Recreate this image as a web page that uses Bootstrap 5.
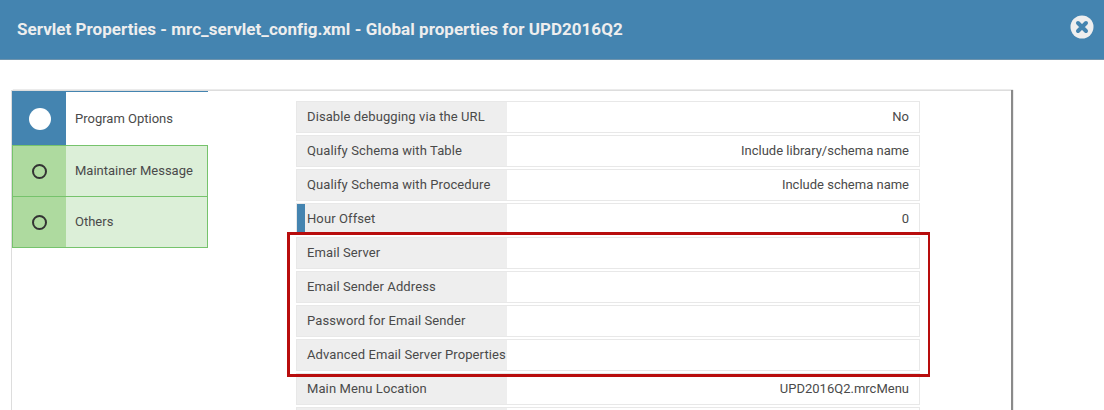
<!DOCTYPE html>
<html lang="en">
<head>
<meta charset="utf-8">
<title>Servlet Properties</title>
<link href="https://cdn.jsdelivr.net/npm/bootstrap@5.3.0/dist/css/bootstrap.min.css" rel="stylesheet">
<style>
html,body{height:410px;overflow:hidden;background:#fff}
body{font-family:Roboto,"Liberation Sans",sans-serif;font-size:13px;color:#4a4a4a}
.dlg-head{height:60px;background:#4484b0;border-bottom:1px solid #6f94ad;padding:0 10px 0 17px;color:#eee}
.dlg-title{font-size:17px;font-weight:700;margin:0;line-height:1;letter-spacing:.04px}
.close-ico{margin-bottom:6px}
.dlg-panel{margin:30px 0 0 11px;width:1000px;height:400px;border-top:1px solid #ddd;border-left:1px solid #ddd;box-shadow:2px 0 1px #8a8a8a}
.tab-col{width:196px;flex:none}
.tab-item{display:flex;align-items:stretch}
.tab-icon{width:54px;flex:none;display:flex;align-items:center;justify-content:center}
.tab-text{flex:1;display:flex;align-items:center;padding-left:9px}
.tab-on{height:54px;border-top:1px solid #4484b0}
.tab-on .tab-icon{background:#4484b0;padding-left:1px}
.tab-off{height:52px;background:#dcefd8;border:1px solid #76c36c;margin-top:-1px}
.tab-off.first-off{margin-top:0}
.tab-off .tab-icon{background:#aeda9f;width:53px;padding-right:1px}
.dot-on{width:22px;height:22px;border-radius:50%;background:#fff}
.dot-off{width:15px;height:15px;border-radius:50%;border:2px solid #333}
.prop-col{width:624px;margin:10px 0 0 88px;flex:none}
.prop-row{display:flex;height:32px;border:1px solid #e8e8e8;margin-bottom:2px;line-height:30px;background:#fff}
.prop-name{width:210px;flex:none;background:#eee;padding-left:10px;white-space:nowrap;overflow:hidden;letter-spacing:.1px}
.prop-val{flex:1;text-align:right;padding-right:10px;white-space:nowrap}
.prop-mark .prop-name{border-left:8px solid #4484b0;padding-left:2px}
.red-box{border:3px solid #b80d0d;border-right-width:2px;margin:-5px -10px -4px -9px;padding:2px 8px 2px 6px;position:relative}
.red-box .prop-row:last-child{margin-bottom:1px}
</style>
</head>
<body>
<div class="dlg-head d-flex align-items-center justify-content-between">
  <h1 class="dlg-title">Servlet Properties - mrc_servlet_config.xml - Global properties for UPD2016Q2</h1>
  <svg class="close-ico" width="24" height="24" viewBox="0 0 24 24" aria-label="Close"><circle cx="12" cy="12" r="11.5" fill="#eee"/><path d="M8 8l8 8M16 8l-8 8" stroke="#4484b0" stroke-width="4" stroke-linecap="round"/></svg>
</div>
<div class="dlg-panel d-flex">
  <div class="tab-col">
    <div class="tab-item tab-on"><div class="tab-icon"><span class="dot-on"></span></div><div class="tab-text">Program Options</div></div>
    <div class="tab-item tab-off first-off"><div class="tab-icon"><span class="dot-off"></span></div><div class="tab-text">Maintainer Message</div></div>
    <div class="tab-item tab-off"><div class="tab-icon"><span class="dot-off"></span></div><div class="tab-text">Others</div></div>
  </div>
  <div class="prop-col">
    <div class="prop-row"><div class="prop-name">Disable debugging via the URL</div><div class="prop-val">No</div></div>
    <div class="prop-row"><div class="prop-name">Qualify Schema with Table</div><div class="prop-val">Include library/schema name</div></div>
    <div class="prop-row"><div class="prop-name">Qualify Schema with Procedure</div><div class="prop-val">Include schema name</div></div>
    <div class="prop-row prop-mark"><div class="prop-name">Hour Offset</div><div class="prop-val">0</div></div>
    <div class="red-box">
      <div class="prop-row"><div class="prop-name">Email Server</div><div class="prop-val"></div></div>
      <div class="prop-row"><div class="prop-name">Email Sender Address</div><div class="prop-val"></div></div>
      <div class="prop-row"><div class="prop-name">Password for Email Sender</div><div class="prop-val"></div></div>
      <div class="prop-row"><div class="prop-name">Advanced Email Server Properties</div><div class="prop-val"></div></div>
    </div>
    <div class="prop-row"><div class="prop-name">Main Menu Location</div><div class="prop-val">UPD2016Q2.mrcMenu</div></div>
    <div class="prop-row"><div class="prop-name"></div><div class="prop-val"></div></div>
  </div>
</div>
</body>
</html>
